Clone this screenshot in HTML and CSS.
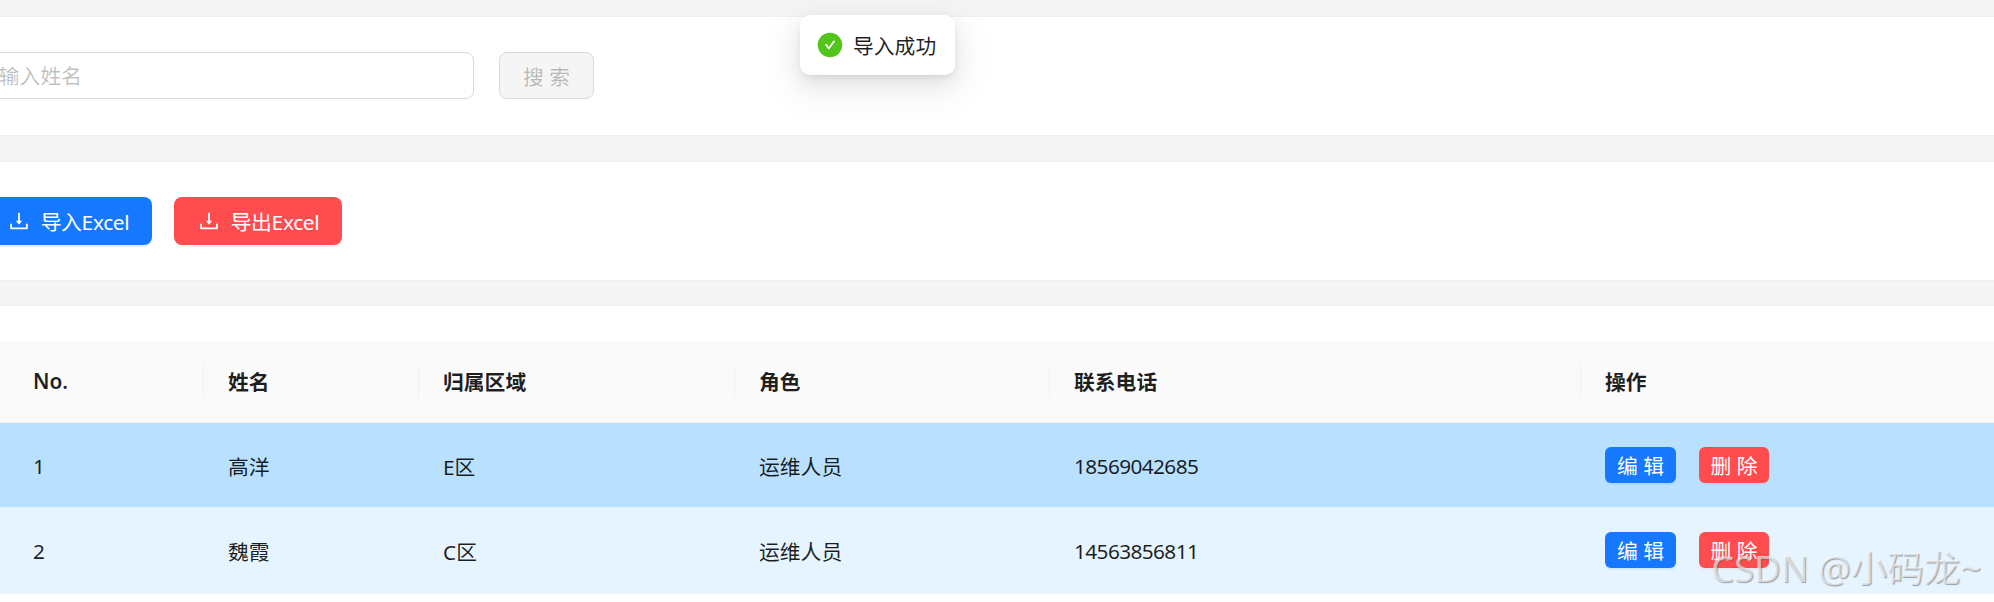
FILE: index.html
```html
<!DOCTYPE html>
<html lang="zh-CN">
<head>
    <meta charset="UTF-8">
    <title>用户管理</title>
    <link rel="stylesheet" href="styles.css">
</head>
<body>

<div class="toast">
    <svg class="toast-icon" viewBox="0 0 1024 1024"><path d="M512 64C264.6 64 64 264.6 64 512s200.6 448 448 448 448-200.6 448-448S759.4 64 512 64zm193.5 301.7l-210.6 292a31.8 31.8 0 01-51.7 0L318.5 484.9c-3.8-5.3 0-12.7 6.5-12.7h46.9c10.2 0 19.9 4.9 25.9 13.3l71.2 98.8 157.2-218c6-8.3 15.6-13.3 25.9-13.3H699c6.5 0 10.3 7.4 6.5 12.7z"/></svg>
    <span>导入成功</span>
</div>

<div class="page">
    <div class="card search-card">
        <div class="search-input">请输入姓名</div>
        <button class="btn btn-disabled">搜 索</button>
    </div>

    <div class="card action-card">
        <button class="btn btn-large btn-blue">
            <svg class="btn-icon" viewBox="0 0 1024 1024"><path d="M505.7 661a8 8 0 0012.6 0l112-141.7c4.1-5.2.4-12.9-6.3-12.9h-74.1V168c0-4.4-3.6-8-8-8h-60c-4.4 0-8 3.6-8 8v338.3H400c-6.7 0-10.4 7.7-6.3 12.9l112 141.8zM878 626h-60c-4.4 0-8 3.6-8 8v154H214V634c0-4.4-3.6-8-8-8h-60c-4.4 0-8 3.6-8 8v198c0 17.7 14.3 32 32 32h684c17.7 0 32-14.3 32-32V634c0-4.4-3.6-8-8-8z"/></svg>
            <span>导入Excel</span>
        </button>
        <button class="btn btn-large btn-red">
            <svg class="btn-icon" viewBox="0 0 1024 1024"><path d="M505.7 661a8 8 0 0012.6 0l112-141.7c4.1-5.2.4-12.9-6.3-12.9h-74.1V168c0-4.4-3.6-8-8-8h-60c-4.4 0-8 3.6-8 8v338.3H400c-6.7 0-10.4 7.7-6.3 12.9l112 141.8zM878 626h-60c-4.4 0-8 3.6-8 8v154H214V634c0-4.4-3.6-8-8-8h-60c-4.4 0-8 3.6-8 8v198c0 17.7 14.3 32 32 32h684c17.7 0 32-14.3 32-32V634c0-4.4-3.6-8-8-8z"/></svg>
            <span>导出Excel</span>
        </button>
    </div>

    <div class="card table-card">
        <table>
            <thead>
                <tr>
                    <th class="col-no">No.</th>
                    <th class="col-name">姓名</th>
                    <th class="col-area">归属区域</th>
                    <th class="col-role">角色</th>
                    <th class="col-phone">联系电话</th>
                    <th class="col-ops">操作</th>
                </tr>
            </thead>
            <tbody>
                <tr class="row-selected">
                    <td>1</td>
                    <td>高洋</td>
                    <td>E区</td>
                    <td>运维人员</td>
                    <td class="phone">18569042685</td>
                    <td>
                        <div class="ops">
                            <button class="btn btn-small btn-blue">编 辑</button>
                            <button class="btn btn-small btn-red">删 除</button>
                        </div>
                    </td>
                </tr>
                <tr class="row-light">
                    <td>2</td>
                    <td>魏霞</td>
                    <td>C区</td>
                    <td>运维人员</td>
                    <td class="phone">14563856811</td>
                    <td>
                        <div class="ops">
                            <button class="btn btn-small btn-blue">编 辑</button>
                            <button class="btn btn-small btn-red">删 除</button>
                        </div>
                    </td>
                </tr>
            </tbody>
        </table>
    </div>
</div>

<div class="watermark">CSDN @小码龙~</div>

</body>
</html>
```

FILE: styles.css
```css
* {
    box-sizing: border-box;
}

html, body {
    height: 100%;
}

body {
    margin: 0;
    overflow: hidden;
    background-color: #f5f5f5;
    color: rgba(0, 0, 0, 0.88);
    font-family: "Noto Sans", "Noto Sans CJK SC", sans-serif;
    font-size: 20.8px;
}

/* the screenshot is scrolled a little to the right */
.page {
    margin-left: -16px;
    padding-top: 16px;
}

.card {
    background-color: white;
    border-top: 1px solid #f0f0f0;
    border-bottom: 1px solid #f0f0f0;
}

.search-card {
    display: flex;
    align-items: flex-start;
    gap: 25px;
    height: 120px;
    margin-bottom: 25px;
    padding-top: 35px;
}

.search-input {
    width: 531px;
    height: 47px;
    margin-left: -41px;
    padding-left: 34px;
    line-height: 46px;
    border: 1px solid #d9d9d9;
    border-radius: 8px;
    color: rgba(0, 0, 0, 0.25);
}

.action-card {
    display: flex;
    align-items: center;
    gap: 22px;
    height: 120px;
    margin-bottom: 24px;
}

.table-card {
    padding-top: 35px;
    height: 300px;
    border-bottom: none;
}

.btn {
    display: flex;
    align-items: center;
    justify-content: center;
    border: none;
    font-family: inherit;
    white-space: nowrap;
}

.btn-disabled {
    width: 95px;
    height: 47px;
    border: 1px solid #d9d9d9;
    border-radius: 8px;
    background-color: #f5f5f5;
    color: rgba(0, 0, 0, 0.25);
    font-size: 20.8px;
}

.btn-large {
    gap: 10px;
    width: 168px;
    height: 48px;
    border-radius: 8px;
    font-size: 20.8px;
    letter-spacing: -0.3px;
}

.btn-small {
    height: 36px;
    padding: 0;
    border-radius: 6px;
    font-size: 20.8px;
}

.btn-blue {
    background-color: #1677ff;
    color: white;
    box-shadow: 0 2px 0 rgba(5, 145, 255, 0.1);
}

.btn-red {
    background-color: #ff4d4f;
    color: white;
    box-shadow: 0 2px 0 rgba(255, 38, 5, 0.06);
}

.btn-icon {
    width: 24px;
    height: 24px;
    fill: white;
}

.ops {
    display: flex;
    gap: 23px;
    margin-top: -2px;
}

.ops .btn-blue {
    width: 71px;
}

.ops .btn-red {
    width: 70px;
}

table {
    width: 2100px;
    border-collapse: collapse;
    table-layout: fixed;
}

th {
    position: relative;
    height: 81px;
    padding: 0 25px 0 24px;
    background-color: #fafafa;
    border-bottom: 1px solid #f0f0f0;
    text-align: left;
    font-weight: 600;
}

th:not(:last-child)::before {
    content: "";
    position: absolute;
    top: 24px;
    right: 0;
    width: 1px;
    height: 33px;
    background-color: #f0f0f0;
}

td {
    padding: 2px 25px 0 24px;
    height: 85px;
}

.phone {
    letter-spacing: -0.6px;
}

.col-no {
    width: 220px;
    padding-left: 49px;
}

td:first-child {
    padding-left: 49px;
}

.col-name {
    width: 215px;
}

.col-area {
    width: 316px;
}

.col-role {
    width: 315px;
}

.col-phone {
    width: 531px;
}

.row-selected td {
    background-color: #bae0ff;
}

.row-light td {
    height: 86px;
    background-color: #e6f4ff;
    border-bottom: 1px solid #f0f0f0;
}

/* message popup, floats over the page */
.toast {
    position: absolute;
    top: 15px;
    left: 800px;
    display: flex;
    align-items: center;
    gap: 9px;
    width: 155px;
    height: 60px;
    padding-left: 16px;
    background-color: white;
    border-radius: 10px;
    box-shadow: 0 8px 21px 0 rgba(0, 0, 0, 0.08), 0 4px 8px -4px rgba(0, 0, 0, 0.12), 0 12px 36px 10px rgba(0, 0, 0, 0.05);
    font-size: 20.8px;
}

.toast-icon {
    width: 28px;
    height: 28px;
    fill: #52c41a;
}

/* site watermark burnt into the screenshot */
.watermark {
    position: absolute;
    top: 540px;
    left: 1711px;
    color: rgba(255, 255, 255, 0.6);
    font-size: 36.5px;
    white-space: nowrap;
    text-shadow: 1px 1px 1px rgba(90, 90, 90, 0.55);
}
```
